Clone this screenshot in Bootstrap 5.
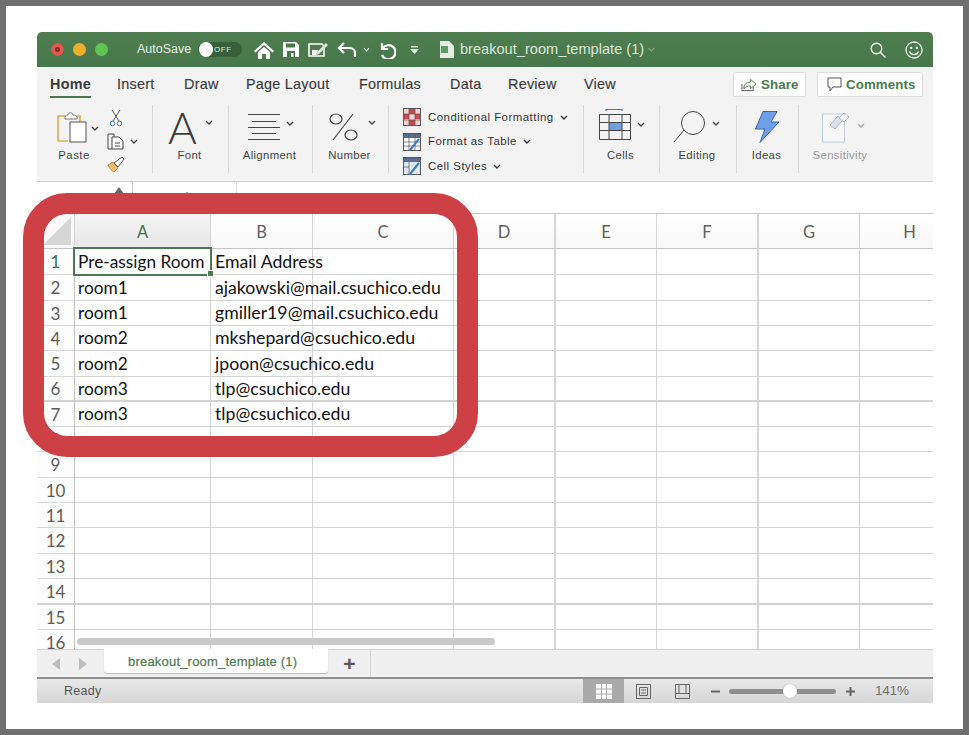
<!DOCTYPE html>
<html lang="en">
<head>
<meta charset="utf-8">
<title>breakout_room_template</title>
<link href="https://cdn.jsdelivr.net/npm/bootstrap@5.3.0/dist/css/bootstrap.min.css" rel="stylesheet">
<style>
html,body{margin:0;background:#fff}
body{font-family:"Liberation Sans",Arial,sans-serif;color:#333}
.frame{width:969px;height:735px;border:6px solid #6f6f6f;background:#fff;padding:26px 30px 25px 31px;position:relative;overflow:hidden}
.xl{width:896px;height:672px;display:flex;flex-direction:column;overflow:hidden;border-radius:5px 5px 0 0}
.titlebar{height:35px;background:linear-gradient(#4f7d50,#47784a);color:#e9f0e9;flex:none;padding-left:14px}
.lamp{width:13px;height:13px;border-radius:50%;margin-right:9px;flex:none}
.lamp-r{background:#e0443e;box-shadow:inset 0 0 0 4px #dc5a50,inset 0 0 0 6px #8c2a28}
.lamp-y{background:#eeb02c}.lamp-g{background:#5fc454}
.auto{font-size:12.5px;margin-left:20px;width:61px;white-space:nowrap}
.tog{width:44px;height:15px;background:#37603a;border-radius:8px;font-size:8px;letter-spacing:.6px;color:#dfe8df;padding-left:16px;line-height:15px;position:relative;flex:none;margin-right:12px}
.tog::before{content:"";position:absolute;left:1px;top:0;width:14px;height:15px;border-radius:50%;background:#fff}
.qa{flex:none;margin-right:8px}
.m-redo{margin-left:8px}.m-more{margin-left:14px}.m-file{margin-left:21px}.m-find{margin-left:214px}.m-face{margin-left:19px}
.doc-name{font-size:14.6px;margin-left:6px;white-space:nowrap;width:187px;color:#dce7dc}
.tabsrow{height:38px;background:#f3f3f3;flex:none;font-size:14.4px;letter-spacing:.25px;color:#3a3a3a;padding-left:13px;font-weight:400;padding-bottom:4px}
.tabname{white-space:nowrap;position:relative;line-height:34px;-webkit-text-stroke:.15px #3a3a3a}
.t1{width:67px}.t2{width:67px}.t3{width:62px}.t4{width:113px}.t5{width:91px}.t6{width:58px}.t7{width:76px}.t8{width:149px}
.tabname.on{font-weight:700;-webkit-text-stroke:0}
.tabname.on::after{content:"";position:absolute;left:0;width:41px;bottom:3px;height:2px;background:#4a7a4d}
.pillbtn{height:25px;background:#fff;border:1px solid #dcdcdc;border-radius:2px;color:#4a7a4d;font-weight:700;font-size:13.3px;flex:none;letter-spacing:.1px;margin-top:1px}
.pb-a{width:73px;margin-right:11px;padding-left:7px}.pb-b{width:106px;padding-left:9px}
.ribbon{height:77px;background:#f3f3f3;border-bottom:1px solid #cfcfcf;flex:none;align-items:flex-start}
.rg{height:68px;border-right:1px solid #d8d8d8;flex:none;display:flex;flex-direction:column;font-size:11.4px;letter-spacing:.32px;color:#444;padding-right:2px}
.g-paste{width:116px;padding-right:0}.g-font{width:76px}.g-align{width:84px}.g-num{width:76px}.g-style{width:195px;padding-left:14px;padding-right:0}.g-cells{width:76px}.g-edit{width:77px}.g-idea{width:62px}.g-sens{width:84px;color:#9a9a9a;border-right:0}
.rg-lab{text-align:center;line-height:14px;white-space:nowrap;flex:none}
.rg-ic{height:43px;display:flex;align-items:center;flex:none}
.pl-font{padding-left:15px}.pl-align{padding-left:19px}.pl-num{padding-left:16px}.pl-cells{padding-left:15px;padding-bottom:5px}.pl-edit{padding-left:13px}.pl-sens{padding-left:23px}
.styl{height:24.5px;flex:none;white-space:nowrap;font-size:11.4px;letter-spacing:.5px;color:#333}
.styl svg:first-child{margin-right:7px}
.chev{flex:none;margin-left:6px}
.chev-up{margin-top:-6px}.chev-w{margin-left:8px}.chev-c{margin-left:6px}
.paste-wrap{padding-left:19px}
.paste-col{width:36px}.paste-ic{display:block;margin-top:5px}.paste-lab{margin-top:4px;width:36px;letter-spacing:.45px}
.paste-chev{margin:21px 0 0 -1px;color:#444;flex:none}
.tools-col{padding-left:0;margin-left:8px;width:40px}
.tool-cut{display:block;margin:5px 0 0 3px}.tool-copy{margin-top:6px}.tool-brush{display:block;margin-top:6px}
.big-a{font-family:Lato,"Liberation Sans",sans-serif;font-weight:300;font-size:44px;line-height:36px;color:#3b3b3b;width:27px;letter-spacing:0}
.a-chev{margin-left:10px;margin-top:-8px}
.sens-chev{color:#aaa;margin-top:-3px}
.fbar{height:32px;background:#fff;border-bottom:1px solid #c8c8c8;flex:none;font-size:14px;color:#888}
.namebox{width:96px;height:31px;border-right:1px solid #ccc;flex:none;position:relative}
.namebox::after{content:"";position:absolute;left:77px;top:5px;border:5px solid transparent;border-top:0;border-bottom:7px solid #666}
.fx-tools{width:104px;height:31px;padding-left:16px;padding-top:6px;letter-spacing:6px;flex:none;white-space:nowrap;font-family:"Liberation Serif",serif;font-style:italic;border-right:1px solid #ddd}
.fx-text{font-size:14px;letter-spacing:.3px;padding:8px 0 0 7px}
.sheet-area{height:435px;overflow:hidden;position:relative;flex:none;background:#fff}
.gridt{table-layout:fixed;width:923px;max-width:none;border-collapse:separate;border-spacing:0;font-family:Lato,"Open Sans",sans-serif;color:#111}
.c-h{width:38px}.c-a{width:136px}.c-b{width:102px}.c-c{width:141px}.c-d{width:102px}.c-e{width:101px}.c-f{width:102px}.c-g{width:101px}.c-x{width:100px}
.gridt th,.gridt td{padding:0;border-right:1px solid #d4d4d4;border-bottom:1px solid #d4d4d4;white-space:nowrap;overflow:visible;font-weight:400;font-size:17.7px;line-height:1;vertical-align:middle}
.gridt td{padding-left:4px}
.gridt td.rh{padding:0;text-align:center;color:#5b5b5b;background:#fdfdfd;font-size:17px;border-right-color:#c4c4c4;border-bottom-color:#d8d8d8}
.gridt td.rh + td{padding-left:3px;font-size:17.3px}
.gridt thead th{height:35px;padding-top:3px;text-align:center;background:linear-gradient(#fff,#f8f8f8);color:#5f5f5f;font-size:16.5px;border-bottom-color:#c4c4c4}
.gridt thead th.sel{background:linear-gradient(#f4f4f4,#e8e8e8);color:#3f7047}
.gridt th.cor{background:#fafafa;position:relative}
.gridt th.cor::after{content:"";position:absolute;right:3px;bottom:3px;border-style:solid;border-width:0 0 28px 28px;border-color:transparent transparent #d6d6d6 transparent}
.r26{height:26px}.r25{height:25px}
.gridt tr.hv td{border-bottom:2px solid #d2d2d2}
.gridt .vt{border-right:2px solid #d6d6d6}
.rh.gr{color:#3f7047!important}
.a1{position:relative}
.a1::before{content:"";position:absolute;left:-2px;top:-2px;right:-2px;bottom:-2px;border:2.5px solid #4b7a52;pointer-events:none}
.a1::after{content:"";position:absolute;right:-4px;bottom:-3px;width:7px;height:7px;background:#4b7a52;border:1px solid #fff}
.hscroll{position:absolute;left:40px;top:424px;width:418px;height:7px;border-radius:4px;background:#c9c9c9}
.sheetbar{height:28px;background:#f0f0f0;border-top:1px solid #cfcfcf;flex:none}
.nav-arrows{width:67px;padding-left:15px;gap:17px;flex:none}
.sheet-tab{width:224px;height:24px;background:#fff;border-radius:0 0 3px 3px;box-shadow:0 1px 1px #bbb;color:#4a7a4d;font-size:13px;letter-spacing:.2px;padding-left:24px;line-height:26px;margin-top:-1px;flex:none;-webkit-text-stroke:.2px #4a7a4d;white-space:nowrap}
.addt{width:43px;height:27px;border-right:1px solid #d5d5d5;color:#555;font-size:21px;font-weight:700;line-height:28px;text-align:center;flex:none;padding-left:1px}
.statusbar{height:26px;border-top:2px solid #8f8f8f;background:linear-gradient(#e8e8e8,#d6d6d6);flex:none;font-size:12.5px;letter-spacing:.3px;color:#555}
.ready{width:546px;padding-left:27px;flex:none}
.viewon{width:41px;height:24px;background:#a9a9a9;flex:none}
.v1{flex:none;margin-left:12px}.v2{flex:none;margin-left:24px}.v3{flex:none;margin-left:21px}.v4{flex:none}
.slid{width:107px;height:5px;border-radius:3px;background:#8e8e8e;position:relative;flex:none;margin:0 10px 0 9px}
.slid::after{content:"";position:absolute;left:54px;top:-5px;width:14px;height:14px;border-radius:50%;background:#fff;box-shadow:0 0 1px #888}
.zoomv{margin-left:20px;font-size:13.5px;letter-spacing:-.2px;flex:none;color:#707070}
.ring{position:absolute;left:17px;top:187px;width:455px;height:264px;border:21px solid #cd4046;border-radius:44px;pointer-events:none}
</style>
</head>
<body>
<svg width="0" height="0" class="d-none"><defs>
<symbol id="cv" viewBox="0 0 8 5"><path d="M1 1l3 3 3-3" fill="none" stroke="currentColor" stroke-width="1.4"/></symbol>
</defs></svg>
<div class="frame">
<div class="xl">
  <div class="titlebar d-flex align-items-center">
    <span class="lamp lamp-r"></span><span class="lamp lamp-y"></span><span class="lamp lamp-g"></span>
    <span class="auto">AutoSave</span>
    <span class="tog">OFF</span>
    <svg class="qa" width="20" height="18" viewBox="0 0 20 18"><path d="M10 1L0 10l1.500 1.500L10 4l8.500 7.500L20 10z" fill="#fff"/><path d="M4 11l6-5 6 5v7h-4v-5H8v5H4z" fill="#fff"/></svg>
    <svg class="qa" width="18" height="17" viewBox="0 0 18 17"><path d="M1 1h13l3 3v12H1z" fill="#fff"/><rect x="4" y="2.500" width="9" height="4" fill="#47784a"/><rect x="5" y="10" width="8" height="6" fill="#47784a"/><rect x="9" y="12" width="2.500" height="4" fill="#fff"/></svg>
    <svg class="qa" width="21" height="17" viewBox="0 0 21 17"><path d="M1 3h13l2 2v10H1z" fill="none" stroke="#fff" stroke-width="1.600"/><path d="M4 14V9h6l-2 5z" fill="#fff"/><path d="M9 11l9-9 2 2-9 9-3 1z" fill="#dfe9df"/></svg>
    <svg width="20" height="16" viewBox="0 0 20 16"><path d="M7 1L2 6l5 5M2 6h11a5 5 0 0 1 5 5v4" fill="none" stroke="#fff" stroke-width="2.200"/></svg>
    <svg class="chev" width="7" height="5" color="#dfe9df"><use href="#cv"/></svg>
    <svg class="m-redo" width="18" height="18" viewBox="0 0 18 18"><path d="M4 2v6l6 0M4.500 7.500A7 7 0 1 1 4 14" fill="none" stroke="#fff" stroke-width="2.200"/></svg>
    <svg class="m-more" width="9" height="8" viewBox="0 0 9 8"><rect x="1" y="0" width="7" height="1.400" fill="#dfe9df"/><path d="M0 3h9L4.500 8z" fill="#dfe9df"/></svg>
    <svg class="m-file" width="14" height="17" viewBox="0 0 14 17"><path d="M0 0h9l5 5v12H0z" fill="#e4ede4"/><rect x="1" y="5" width="7" height="7" fill="#5c9a68"/></svg>
    <span class="doc-name">breakout_room_template (1)</span>
    <svg width="9" height="5" color="#7da37f"><use href="#cv"/></svg>
    <svg class="m-find" width="16" height="16" viewBox="0 0 16 16"><circle cx="6.500" cy="6.500" r="5.300" fill="none" stroke="#f2f6f2" stroke-width="1.400"/><path d="M10.500 10.500L15.500 15.500" stroke="#f2f6f2" stroke-width="1.500"/></svg>
    <svg class="m-face" width="18" height="18" viewBox="0 0 18 18"><circle cx="9" cy="9" r="8" fill="none" stroke="#f2f6f2" stroke-width="1.300"/><circle cx="6.200" cy="7" r="1.200" fill="#f2f6f2"/><circle cx="11.800" cy="7" r="1.200" fill="#f2f6f2"/><path d="M4.500 10.500a4.800 4.800 0 0 0 9 0" fill="none" stroke="#f2f6f2" stroke-width="1.300"/></svg>
  </div>

  <div class="tabsrow d-flex align-items-center">
    <span class="tabname t1 on">Home</span><span class="tabname t2">Insert</span><span class="tabname t3">Draw</span><span class="tabname t4">Page Layout</span><span class="tabname t5">Formulas</span><span class="tabname t6">Data</span><span class="tabname t7">Review</span><span class="tabname t8">View</span>
    <span class="pillbtn pb-a d-flex align-items-center gap-1"><svg width="16" height="15" viewBox="0 0 17 15"><path d="M1 7v7h12v-4" fill="none" stroke="#555" stroke-width="1"/><path d="M3 12c0-5 3-7 7-7V2l6 5-6 5V9c-3 0-5 1-7 3z" fill="#fff" stroke="#4a7a4d" stroke-width="1"/></svg>Share</span>
    <span class="pillbtn pb-b d-flex align-items-center gap-1"><svg width="15" height="15" viewBox="0 0 15 15"><path d="M1 1h13v9H6l-3 4v-4H1z" fill="none" stroke="#555" stroke-width="1"/></svg>Comments</span>
  </div>

  <div class="ribbon d-flex">
    <div class="rg g-paste">
      <div class="d-flex paste-wrap">
        <div class="paste-col">
          <svg class="paste-ic" width="33" height="34" viewBox="0 0 33 34"><path d="M2 31V6h8M20 6h4v6" fill="none" stroke="#e2aa4c" stroke-width="1.600"/><path d="M2 31h10" stroke="#e2aa4c" stroke-width="1.600"/><path d="M9 7c1-1 2-2 3-2 0-3 5-3 5 0 2 0 3 1 4 2v2H9z" fill="#fff" stroke="#777"/><rect x="14" y="12" width="16" height="20" fill="#fff" stroke="#555"/></svg>
          <div class="rg-lab paste-lab">Paste</div>
        </div>
        <svg class="paste-chev" width="8" height="5"><use href="#cv"/></svg>
        <div class="tools-col">
          <svg class="tool-cut" width="12" height="17" viewBox="0 0 12 17"><path d="M2 0l7 11M10 0L3 11" stroke="#444" stroke-width=".9" fill="none"/><circle cx="2.500" cy="13.500" r="2.300" fill="none" stroke="#3d7cc0"/><circle cx="9.500" cy="13.500" r="2.300" fill="none" stroke="#3d7cc0"/></svg>
          <div class="d-flex align-items-center tool-copy"><svg width="17" height="17" viewBox="0 0 17 17"><path d="M5 16H1V1h6v3" fill="none" stroke="#444"/><path d="M5 4h7l4 4v8H5z" fill="#fff" stroke="#444"/><path d="M8 10h5M8 13h5" stroke="#444"/></svg><svg class="chev" width="8" height="5"><use href="#cv"/></svg></div>
          <svg class="tool-brush" width="18" height="17" viewBox="0 0 18 17"><path d="M1 9l5-3 5 6-4 4c-2-1-4-3-6-7z" fill="#f0bb6a" stroke="#c08f3e"/><path d="M7 7l4-3 4-3 2 2-3 4-3 4z" fill="#fff" stroke="#555"/></svg>
        </div>
      </div>
    </div>
    <div class="rg g-font">
      <div class="rg-ic pl-font"><span class="big-a">A</span><svg class="chev a-chev" width="8" height="5"><use href="#cv"/></svg></div>
      <div class="rg-lab">Font</div>
    </div>
    <div class="rg g-align">
      <div class="rg-ic pl-align"><svg width="32" height="26" viewBox="0 0 32 26" stroke="#444"><path d="M0 .5h32M4 7.500h24M0 13.500h32M4 19.500h24M0 25.500h32"/></svg><svg class="chev chev-up" width="8" height="5"><use href="#cv"/></svg></div>
      <div class="rg-lab">Alignment</div>
    </div>
    <div class="rg g-num">
      <div class="rg-ic pl-num"><svg width="29" height="28" viewBox="0 0 29 28" fill="none" stroke="#444" stroke-width="1.200"><ellipse cx="7" cy="6" rx="6" ry="5"/><ellipse cx="22" cy="22" rx="6" ry="5"/><path d="M24 1L4 27"/></svg><svg class="chev chev-w a-chev" width="8" height="5"><use href="#cv"/></svg></div>
      <div class="rg-lab">Number</div>
    </div>
    <div class="rg g-style">
      <div class="styl d-flex align-items-center"><svg width="18" height="18" viewBox="0 0 18 18"><rect x=".5" y=".5" width="17" height="17" fill="#f6d3d3" stroke="#555"/><path d="M6 1h6v5H6zM12 6h5v5h-5zM1 6h5v5H1zM6 12h6v5H6z" fill="#c9484a"/><path d="M6 1v16M12 1v16M1 6h16M1 12h16" stroke="#555" stroke-width=".7"/></svg>Conditional Formatting<svg class="chev" width="8" height="5"><use href="#cv"/></svg></div>
      <div class="styl d-flex align-items-center"><svg width="18" height="18" viewBox="0 0 18 18"><rect x=".5" y=".5" width="17" height="17" fill="#fff" stroke="#555"/><path d="M1 1h16v4H1z" fill="#5a6f8a"/><path d="M6 1v16M12 1v16M1 9h16M1 13h16" stroke="#555" stroke-width=".7"/><path d="M7 17l9-11" stroke="#3d7cc0" stroke-width="2"/></svg>Format as Table<svg class="chev" width="8" height="5"><use href="#cv"/></svg></div>
      <div class="styl d-flex align-items-center"><svg width="18" height="18" viewBox="0 0 18 18"><rect x=".5" y=".5" width="17" height="17" fill="#dbe7f3" stroke="#555"/><path d="M1 1h16v4H1z" fill="#5a6f8a"/><path d="M6 5v12M1 10h5" stroke="#555" stroke-width=".7"/><path d="M7 17l9-11" stroke="#3d7cc0" stroke-width="2"/></svg>Cell Styles<svg class="chev" width="8" height="5"><use href="#cv"/></svg></div>
    </div>
    <div class="rg g-cells">
      <div class="rg-ic pl-cells"><svg width="32" height="31" viewBox="0 0 32 31" fill="none"><path d="M7 .5h16M7 0v2M23 0v2" stroke="#3d7cc0"/><rect x="10" y="13" width="13" height="9" fill="#6f9fdc"/><path d="M.5 5.500h31v25H.5zM.5 13.500h31M.5 21.500h31M10 5.500v25M23 5.500v25" stroke="#444"/></svg><svg class="chev chev-c" width="8" height="5"><use href="#cv"/></svg></div>
      <div class="rg-lab">Cells</div>
    </div>
    <div class="rg g-edit">
      <div class="rg-ic pl-edit"><svg width="33" height="33" viewBox="0 0 33 33" fill="none" stroke="#444"><circle cx="20" cy="13" r="11.500"/><path d="M11 20L1 32"/></svg><svg class="chev chev-up" width="8" height="5"><use href="#cv"/></svg></div>
      <div class="rg-lab">Editing</div>
    </div>
    <div class="rg g-idea">
      <div class="rg-ic justify-content-center"><svg width="24" height="32" viewBox="0 0 24 32"><path d="M8 .5h14L16 11h8L5 31.500 10 18H.5z" fill="#6f9fe8" stroke="#3a66a8"/></svg></div>
      <div class="rg-lab">Ideas</div>
    </div>
    <div class="rg g-sens">
      <div class="rg-ic pl-sens"><svg width="29" height="32" viewBox="0 0 29 32" fill="none"><rect x=".5" y="3" width="22" height="28" fill="#f7f7f7" stroke="#bcd0e6"/><path d="M8 14l8-9 5 4-8 9z" fill="#dbe3ea" stroke="#a9b7c4"/><path d="M17 7l5-5 5 4-5 5z" fill="#fff" stroke="#a9b7c4"/></svg><svg class="chev sens-chev" width="8" height="5"><use href="#cv"/></svg></div>
      <div class="rg-lab">Sensitivity</div>
    </div>
  </div>

  <div class="fbar d-flex">
    <div class="namebox"></div>
    <div class="fx-tools">×✓fx</div>
    <div class="fx-text">Pre-assign Room</div>
  </div>

  <div class="sheet-area">
    <table class="gridt">
      <colgroup><col class="c-h"><col class="c-a"><col class="c-b"><col class="c-c"><col class="c-d"><col class="c-e"><col class="c-f"><col class="c-g"><col class="c-x"></colgroup>
      <thead><tr><th class="cor"></th><th class="sel">A</th><th>B</th><th>C</th><th class="vt">D</th><th>E</th><th class="vt">F</th><th>G</th><th>H</th></tr></thead>
      <tbody>
        <tr class="r26"><td class="rh gr">1</td><td class="a1">Pre-assign Room</td><td>Email Address</td><td></td><td class="vt"></td><td></td><td class="vt"></td><td></td><td></td></tr>
        <tr class="r26"><td class="rh">2</td><td>room1</td><td>ajakowski@mail.csuchico.edu</td><td></td><td class="vt"></td><td></td><td class="vt"></td><td></td><td></td></tr>
        <tr class="r25"><td class="rh">3</td><td>room1</td><td>gmiller19@mail.csuchico.edu</td><td></td><td class="vt"></td><td></td><td class="vt"></td><td></td><td></td></tr>
        <tr class="r25"><td class="rh">4</td><td>room2</td><td>mkshepard@csuchico.edu</td><td></td><td class="vt"></td><td></td><td class="vt"></td><td></td><td></td></tr>
        <tr class="r26"><td class="rh">5</td><td>room2</td><td>jpoon@csuchico.edu</td><td></td><td class="vt"></td><td></td><td class="vt"></td><td></td><td></td></tr>
        <tr class="r25 hv"><td class="rh">6</td><td>room3</td><td>tlp@csuchico.edu</td><td></td><td class="vt"></td><td></td><td class="vt"></td><td></td><td></td></tr>
        <tr class="r25"><td class="rh">7</td><td>room3</td><td>tlp@csuchico.edu</td><td></td><td class="vt"></td><td></td><td class="vt"></td><td></td><td></td></tr>
        <tr class="r25"><td class="rh">8</td><td></td><td></td><td></td><td class="vt"></td><td></td><td class="vt"></td><td></td><td></td></tr>
        <tr class="r26"><td class="rh">9</td><td></td><td></td><td></td><td class="vt"></td><td></td><td class="vt"></td><td></td><td></td></tr>
        <tr class="r25"><td class="rh">10</td><td></td><td></td><td></td><td class="vt"></td><td></td><td class="vt"></td><td></td><td></td></tr>
        <tr class="r25"><td class="rh">11</td><td></td><td></td><td></td><td class="vt"></td><td></td><td class="vt"></td><td></td><td></td></tr>
        <tr class="r26"><td class="rh">12</td><td></td><td></td><td></td><td class="vt"></td><td></td><td class="vt"></td><td></td><td></td></tr>
        <tr class="r25"><td class="rh">13</td><td></td><td></td><td></td><td class="vt"></td><td></td><td class="vt"></td><td></td><td></td></tr>
        <tr class="r26 hv"><td class="rh">14</td><td></td><td></td><td></td><td class="vt"></td><td></td><td class="vt"></td><td></td><td></td></tr>
        <tr class="r25"><td class="rh">15</td><td></td><td></td><td></td><td class="vt"></td><td></td><td class="vt"></td><td></td><td></td></tr>
        <tr class="r26"><td class="rh">16</td><td></td><td></td><td></td><td class="vt"></td><td></td><td class="vt"></td><td></td><td></td></tr>
      </tbody>
    </table>
    <div class="hscroll"></div>
  </div>

  <div class="sheetbar d-flex">
    <div class="nav-arrows d-flex align-items-center"><svg width="9" height="12" viewBox="0 0 9 12"><path d="M8 0v12L0 6z" fill="#bdbdbd"/></svg><svg width="9" height="12" viewBox="0 0 9 12"><path d="M1 0v12l8-6z" fill="#bdbdbd"/></svg></div>
    <div class="sheet-tab">breakout_room_template (1)</div>
    <div class="addt">+</div>
  </div>

  <div class="statusbar d-flex align-items-center">
    <div class="ready">Ready</div>
    <div class="viewon d-flex align-items-center justify-content-center"><svg width="16" height="15" viewBox="0 0 16 15"><rect width="16" height="15" fill="#fff"/><path d="M5.500 0v15M10.500 0v15M0 5h16M0 10h16" stroke="#a9a9a9"/></svg></div>
    <svg class="v1" width="15" height="15" viewBox="0 0 15 15" fill="none" stroke="#666"><rect x=".5" y=".5" width="14" height="14"/><path d="M3.500 3.500h8v8h-8zM5 6h5M5 9h5"/></svg>
    <svg class="v2" width="15" height="15" viewBox="0 0 15 15" fill="none" stroke="#666"><path d="M.5.500h14v14H.5zM.5 9.500h14M4 .5v9M11 .5v9" /></svg>
    <svg class="v3" width="9" height="3" viewBox="0 0 9 3"><rect width="9" height="2" y=".5" fill="#666"/></svg>
    <div class="slid"></div>
    <svg class="v4" width="9" height="9" viewBox="0 0 9 9"><path d="M0 3.500h9v2H0zM3.500 0h2v9h-2z" fill="#666"/></svg>
    <div class="zoomv">141%</div>
  </div>
</div>
<div class="ring"></div>
</div>
</body>
</html>
